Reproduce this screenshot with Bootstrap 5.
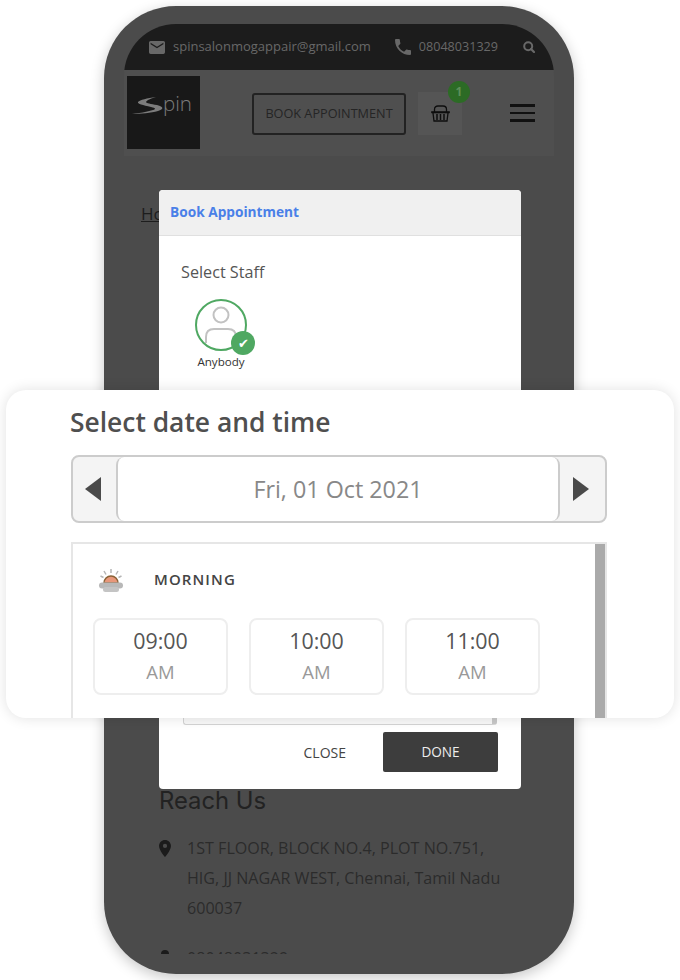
<!DOCTYPE html>
<html lang="en">
<head>
    <meta charset="UTF-8">
    <meta name="viewport" content="width=device-width, initial-scale=1.0">
    <title>Book Appointment</title>
    <link href="https://cdn.jsdelivr.net/npm/bootstrap@5.3.3/dist/css/bootstrap.min.css" rel="stylesheet">
    <style>
        body { background: #fff; font-family: "Open Sans", "Liberation Sans", sans-serif; }
        .stage { width: 680px; height: 980px; overflow: hidden; padding: 6px 0 0 104px; }
        .phone-shell { width: 470px; height: 968px; padding: 18px 20px 20px; background: #4b4b4b; border-radius: 72px; box-shadow: 0 4px 14px rgba(0,0,0,.22); }
        .phone-screen { height: 930px; overflow: hidden; border-radius: 52px 52px 0 0; }
        .top-strip { height: 46px; padding: 0 19px 0 25px; background: #1c1c1c; color: #686868; font-size: 13px; }
        .top-strip svg { fill: #686868; flex: none; }
        .strip-phone { font-size: 12.6px; }
        .site-nav { height: 86px; padding: 6px 19px 7px 3px; background: #4f4f4f; }
        .logo-box { width: 73px; height: 73px; background: #181818; }
        .book-btn { width: 154px; height: 42px; margin: 17px 0 0 52px; border: 2px solid #222; border-radius: 3px; color: #252525; font-size: 12.7px; }
        .basket-box { width: 44px; height: 43px; margin: 16px 0 0 12px; background: #555; }
        .basket-count { top: -11px; right: -8px; width: 22px; height: 22px; background: #2c6b25; color: #5f8f58; font-size: 12px; font-weight: 700; }
        .menu-bars { width: 25px; gap: 5px; margin: 28px 0 0 48px; }
        .menu-bars span { height: 2.5px; background: #111; }
        .crumb-line { padding: 47px 0 0 17px; color: #1d1d1d; font-size: 17px; text-decoration: underline; line-height: 22px; }
        .reach-block { margin-top: 561px; padding: 0 20px 0 35px; color: #2b2b2b; font-size: 16.1px; }
        .reach-title { font-family: Inter, "Liberation Sans", sans-serif; font-size: 23.8px; font-weight: 400; line-height: 30px; margin: 0 0 17px; color: #222; }
        .reach-row { gap: 16px; line-height: 30px; }
        .reach-row svg { flex: none; margin-top: 7px; fill: #1b1b1b; }
        .reach-phone { margin-top: 20px; }

        .book-modal { position: absolute; left: 159px; top: 190px; width: 362px; height: 599px; border: 0; border-radius: 4px; }
        .book-head { height: 46px; padding: 0 11px; background: #f0f0f0; border-bottom: 1px solid #e0e0e0; color: #4a80e8; font-size: 13.7px; font-weight: 700; }
        .book-body { padding: 25px 22px 0; }
        .staff-title { color: #555; font-size: 16.2px; font-weight: 500; line-height: 22px; }
        .staff-pick { width: 78px; margin: 16px 0 0 1px; color: #333; font-size: 11.6px; font-weight: 500; line-height: 14px; }
        .check-dot { right: 5px; bottom: 14px; width: 24px; height: 24px; background: #4fa862; color: #fff; font-size: 13px; line-height: 1; }
        .notes-box { height: 40px; margin: 0 2px 0 2px; border: 1px solid #d4d4d4; border-top: 0; border-right: 5px solid #c8c8c8; border-radius: 0 0 3px 3px; background: #f8f8f8; }
        .book-foot { padding: 7px 23px 17px 0; gap: 37px; }
        .close-link { color: #444; font-size: 14px; }
        .done-btn { width: 115px; height: 40px; padding: 0; background: #3d3d3d; color: #eee; font-size: 13.6px; border-radius: 2px; }

        .date-sheet { position: absolute; left: 6px; top: 390px; width: 668px; height: 328px; overflow: hidden; padding: 15px 67px 0 65px; background: #fff; border-radius: 20px; box-shadow: 0 0 14px rgba(0,0,0,.12); }
        .sheet-title { margin: 0 0 15px -1px; color: #4f4f4f; font-size: 26.4px; font-weight: 600; line-height: 35px; }
        .date-pick { height: 68px; border: 2px solid #ccc; border-radius: 8px; background: #f4f4f4; }
        .date-back { width: 43px; padding-right: 4px; }
        .date-next { width: 45px; padding-right: 4px; }
        .date-value { border-left: 2px solid #ccc; border-right: 2px solid #ccc; border-radius: 8px; background: #fff; color: #888; font-size: 23.3px; }
        .slots-box { height: 190px; margin-top: 19px; padding: 0 0 0 20px; border: 2px solid #e6e6e6; border-bottom: 0; }
        .slots-inner { padding-right: 55px; }
        .day-part { height: 70px; gap: 30px; padding-left: 5px; margin-bottom: 4px; color: #444; font-size: 15px; font-weight: 600; letter-spacing: 1.1px; }
        .day-part svg { margin-top: 3px; }
        .slot-row { gap: 21px; }
        .slot-card { width: 135px; height: 77px; padding-top: 6px; border: 2px solid #eee; border-radius: 8px; }
        .slot-time { color: #555; font-size: 21.4px; line-height: 30px; }
        .slot-half { margin-top: 1px; color: #999; font-size: 18.5px; line-height: 30px; }
        .slot-scroll { width: 10px; background: #aaa; }
    </style>
</head>
<body>
    <div class="stage position-relative">
        <div class="phone-shell">
            <div class="phone-screen">
                <div class="top-strip d-flex align-items-center">
                    <svg width="16" height="13" viewBox="2 4 20 16"><path d="M20 4H4c-1.100 0-2 .9-2 2v12c0 1.100.9 2 2 2h16c1.100 0 2-.9 2-2V6c0-1.100-.9-2-2-2zm0 4l-8 5-8-5V6l8 5 8-5v2z"/></svg>
                    <span class="ms-2">spinsalonmogappair@gmail.com</span>
                    <svg class="ms-4" width="16" height="16" viewBox="3 3 18 18"><path d="M6.620 10.790c1.440 2.830 3.760 5.140 6.590 6.590l2.200-2.200c.27-.27.67-.36 1.020-.24 1.120.37 2.330.57 3.570.57.55 0 1 .45 1 1V20c0 .55-.45 1-1 1-9.390 0-17-7.610-17-17 0-.55.45-1 1-1h3.500c.55 0 1 .45 1 1 0 1.250.2 2.450.57 3.570.11.35.03.74-.25 1.020l-2.200 2.200z"/></svg>
                    <span class="strip-phone ms-2">08048031329</span>
                    <svg class="ms-auto" width="12" height="12" viewBox="0 0 12 12"><circle cx="5.200" cy="5.200" r="4" fill="none" stroke="#686868" stroke-width="2"/><path d="M8 8l3 3" stroke="#686868" stroke-width="2.200" stroke-linecap="round"/></svg>
                </div>
                <div class="site-nav d-flex align-items-start">
                    <div class="logo-box">
                        <svg width="73" height="73" viewBox="0 0 73 73" class="d-block">
                            <path d="M29 21C20 22 13 24 11 26c-1 2 5 3 13 5 5 1 5 2 2 3-6 2-14 3-21 4 9 0 19-1 26-3 6-2 6-4-1-6-6-1-11-2-11-3 1-2 6-4 10-5z" fill="#7c7c7c"/>
                            <text x="36" y="35" fill="#7c7c7c" font-family="Open Sans" font-size="20" font-weight="300" textLength="29" lengthAdjust="spacingAndGlyphs">pin</text>
                        </svg>
                    </div>
                    <button type="button" class="btn book-btn d-flex align-items-center justify-content-center p-0">BOOK APPOINTMENT</button>
                    <div class="basket-box position-relative d-flex align-items-center justify-content-center">
                        <svg width="19" height="17" viewBox="0 0 19 17" fill="none" stroke="#0e0e0e">
                            <path d="M3.500 7V4.500C3.500 2 5 1 7 1h5c2 0 3.500 1 3.500 3.500V7" stroke-width="1.300"/>
                            <path d="M.5 6.500h18v1.500H.5z" fill="#0e0e0e" stroke-width=".6"/>
                            <path d="M2 8l1 8h13l1-8" stroke-width="1.300"/>
                            <path d="M6 9v6M9.500 9v6M13 9v6" stroke-width="1.500"/>
                        </svg>
                        <span class="basket-count position-absolute rounded-circle d-flex align-items-center justify-content-center">1</span>
                    </div>
                    <div class="menu-bars d-flex flex-column">
                        <span></span><span></span><span></span>
                    </div>
                </div>
                <div class="crumb-line">Home</div>
                <div class="reach-block">
                    <h5 class="reach-title">Reach Us</h5>
                    <div class="reach-row d-flex">
                        <svg width="12" height="17" viewBox="5 2 14 20"><path d="M12 2C8.130 2 5 5.130 5 9c0 5.250 7 13 7 13s7-7.750 7-13c0-3.870-3.130-7-7-7zm0 9.500a2.500 2.500 0 0 1 0-5 2.500 2.500 0 0 1 0 5z"/></svg>
                        <div>1ST FLOOR, BLOCK NO.4, PLOT NO.751,<br>HIG, JJ NAGAR WEST, Chennai, Tamil Nadu<br>600037</div>
                    </div>
                    <div class="reach-row reach-phone d-flex">
                        <svg width="12" height="17" viewBox="0 0 12 17"><rect x="2" y="0" width="8" height="17" rx="4"/></svg>
                        <div>08048031329</div>
                    </div>
                </div>
            </div>
        </div>

        <div class="book-modal card d-flex flex-column overflow-hidden">
            <div class="book-head d-flex align-items-center">Book Appointment</div>
            <div class="book-body flex-grow-1 d-flex flex-column">
                <div class="staff-title">Select Staff</div>
                <div class="staff-pick position-relative text-center">
                    <svg width="52" height="52" viewBox="0 0 52 52" class="d-block mx-auto">
                        <circle cx="26" cy="26" r="25" fill="#fff" stroke="#4fa862" stroke-width="2"/>
                        <circle cx="26" cy="16" r="7.500" fill="none" stroke="#c2c2c2" stroke-width="2"/>
                        <path d="M11 44v-6c0-5 3-8 8-8h14c5 0 8 3 8 8v6" fill="none" stroke="#c2c2c2" stroke-width="2"/>
                    </svg>
                    <span class="check-dot position-absolute rounded-circle d-flex align-items-center justify-content-center">✔</span>
                    <div class="mt-1">Anybody</div>
                </div>
                <div class="notes-box mt-auto"></div>
            </div>
            <div class="book-foot d-flex align-items-center justify-content-end">
                <span class="close-link">CLOSE</span>
                <button type="button" class="btn done-btn">DONE</button>
            </div>
        </div>

        <div class="date-sheet">
            <h4 class="sheet-title">Select date and time</h4>
            <div class="date-pick d-flex">
                <div class="date-back d-flex align-items-center justify-content-center">
                    <svg width="16" height="24" viewBox="0 0 16 24"><path d="M16 0v24L0 12z" fill="#4a4a4a"/></svg>
                </div>
                <div class="date-value flex-grow-1 d-flex align-items-center justify-content-center">Fri, 01 Oct 2021</div>
                <div class="date-next d-flex align-items-center justify-content-center">
                    <svg width="16" height="24" viewBox="0 0 16 24"><path d="M0 0v24l16-12z" fill="#4a4a4a"/></svg>
                </div>
            </div>
            <div class="slots-box d-flex">
                <div class="slots-inner flex-grow-1">
                    <div class="day-part d-flex align-items-center">
                        <svg width="26" height="26" viewBox="0 0 26 26">
                            <path d="M13 1v4M6 3l2 3.500M20 3l-2 3.500M2.500 8l3 1.500M23.500 8l-3 1.500" stroke="#b5b5b5" stroke-width="1.500"/>
                            <path d="M6 15a7 7 0 0 1 14 0z" fill="#e8977a" stroke="#8a6236" stroke-width="1.500"/>
                            <rect x="1" y="14.500" width="24" height="6" rx="3" fill="#b8b8b8"/>
                            <rect x="5" y="19" width="16" height="5" rx="2.500" fill="#c4c4c4"/>
                        </svg>
                        <span>MORNING</span>
                    </div>
                    <div class="slot-row d-flex">
                        <div class="slot-card text-center d-flex flex-column"><div class="slot-time">09:00</div><div class="slot-half">AM</div></div>
                        <div class="slot-card text-center d-flex flex-column"><div class="slot-time">10:00</div><div class="slot-half">AM</div></div>
                        <div class="slot-card text-center d-flex flex-column"><div class="slot-time">11:00</div><div class="slot-half">AM</div></div>
                    </div>
                </div>
                <div class="slot-scroll"></div>
            </div>
        </div>
    </div>
    <script src="https://cdn.jsdelivr.net/npm/bootstrap@5.3.3/dist/js/bootstrap.bundle.min.js"></script>
</body>
</html>
